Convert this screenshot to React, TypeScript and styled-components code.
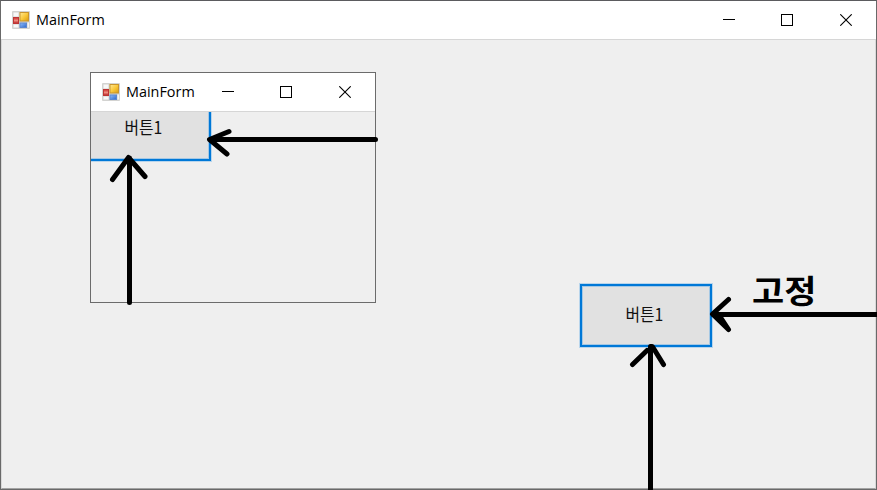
import React from "react";
import styled, { createGlobalStyle } from "styled-components";

const GlobalStyle = createGlobalStyle`
  *, *::before, *::after { box-sizing: border-box; }
  body { margin: 0; overflow: hidden; background: #f0f0f0; font-family: "Open Sans", "Noto Sans", sans-serif; }
`;

const Desktop = styled.main`
  position: relative;
  width: 877px;
  height: 490px;
  overflow: hidden;
`;

const OuterWindow = styled.section`
  width: 877px;
  height: 490px;
  display: flex;
  flex-direction: column;
  border: 1px solid #696969;
  border-top-color: #5b5b5e;
  background: #efefef;
`;

const InnerWindow = styled.section`
  position: absolute;
  left: 88px;
  top: 32px;
  width: 286px;
  height: 231px;
  display: flex;
  flex-direction: column;
  border: 1px solid #6b6b6b;
  background: #efefef;
`;

const TitleBar = styled.header`
  flex: none;
  height: 39px;
  display: flex;
  align-items: center;
  padding-left: 11px;
  background: #fff;
  border-bottom: 1px solid #d6d6d6;
`;

const Title = styled.h1`
  margin: 0 0 2px 6px;
  flex: 1;
  font: 400 15px/20px "Open Sans", "Noto Sans", sans-serif;
  color: #000;
  white-space: nowrap;
`;

const TitleText = styled.span`
  display: inline-block;
  transform: scaleX(0.96);
  transform-origin: left;
`;

const Controls = styled.div<{ $end: number }>`
  display: flex;
  gap: 46px;
  margin-right: ${(p) => p.$end}px;
`;

const ControlButton = styled.button<{ $shift?: number }>`
  display: block;
  width: 12px;
  height: 12px;
  padding: 0;
  border: 0;
  background: none;
  margin-left: ${(p) => p.$shift ?? 0}px;

  svg { display: block; }
`;

const OuterClient = styled.div`
  position: relative;
  flex: 1;
  border: solid #d9d9d9;
  border-width: 0 1px 1px 1px;
  border-bottom-color: #a3a3a3;
`;

const InnerClient = styled.div`
  flex: 1;
  overflow: hidden;
`;

const FormButton = styled.button`
  display: flex;
  align-items: center;
  justify-content: center;
  border: 2px solid #0078d7;
  background: #e1e1e1;
  box-shadow: 0 0 0 1px #b8d5ec, inset 0 0 0 1px #a5c8e4;
  color: #111;
  font: 400 17px/20px "Noto Sans CJK KR", sans-serif;
`;

const AnchoredButton = styled(FormButton)`
  position: absolute;
  left: 578px;
  top: 244px;
  width: 132px;
  height: 63px;
  padding: 0 3px 3px 0;
`;

const ClippedButton = styled(FormButton)`
  width: 132px;
  height: 62px;
  margin: -13px 0 0 -12px;
  padding: 0 3px 7px 0;
`;

const ButtonText = styled.span`
  display: block;
  transform: scaleX(0.93);
`;

const Note = styled.strong`
  position: absolute;
  left: 752px;
  top: 265px;
  color: #000;
  font: 700 35px/48px "Noto Sans CJK KR", sans-serif;
  white-space: nowrap;
  transform: scaleY(0.92);
`;

const ArrowLayer = styled.svg`
  position: absolute;
  inset: 0;
  pointer-events: none;
`;

const FormIcon = () => (
  <svg width="18" height="18" viewBox="0 0 18 18">
    <defs>
      <linearGradient id="gold" x1="0" y1="0" x2="1" y2="1">
        <stop offset="0" stopColor="#ffe99a" />
        <stop offset=".5" stopColor="#fac93c" />
        <stop offset="1" stopColor="#d99a10" />
      </linearGradient>
      <linearGradient id="red" x1="0" y1="0" x2="0" y2="1">
        <stop offset="0" stopColor="#c92e2b" />
        <stop offset=".5" stopColor="#ee8a7f" />
        <stop offset="1" stopColor="#b51f20" />
      </linearGradient>
      <linearGradient id="blue" x1="0" y1="0" x2="1" y2="1">
        <stop offset="0" stopColor="#8fbcff" />
        <stop offset="1" stopColor="#2e69c9" />
      </linearGradient>
    </defs>
    <rect width="18" height="18" rx="1" fill="#d3d3d1" />
    <rect x="1.5" y="1.5" width="5" height="4" fill="#f8f8f8" />
    <rect x="1.5" y="13.5" width="5" height="3" fill="#f8f8f8" />
    <rect x="15.5" y="11.5" width="1.5" height="5" fill="#f4f4f4" />
    <rect x="8" y="1.5" width="8.5" height="8.5" fill="url(#gold)" stroke="#c9952d" />
    <rect x="1.5" y="6.5" width="5" height="6" fill="url(#red)" stroke="#bd3434" />
    <rect x="8" y="12" width="6.5" height="4.5" fill="url(#blue)" stroke="#5c87d0" />
  </svg>
);

const WindowControls = ({ end, shift = 0 }: { end: number; shift?: number }) => (
  <Controls $end={end}>
    <ControlButton aria-label="Minimize">
      <svg width="12" height="12"><path d="M0 5.5H12" stroke="#000" /></svg>
    </ControlButton>
    <ControlButton aria-label="Maximize">
      <svg width="12" height="12"><rect x=".5" y=".5" width="11" height="11" fill="none" stroke="#000" /></svg>
    </ControlButton>
    <ControlButton aria-label="Close" $shift={shift}>
      <svg width="12" height="12"><path d="M.3 .3L11.7 11.7M11.7 .3L.3 11.7" stroke="#000" strokeWidth="1.1" /></svg>
    </ControlButton>
  </Controls>
);

const Bar = ({ end }: { end: number }) => (
  <TitleBar>
    <FormIcon />
    <Title><TitleText>MainForm</TitleText></Title>
    <WindowControls end={end} shift={1} />
  </TitleBar>
);

const Arrows = () => (
  <ArrowLayer width="877" height="490" fill="none" stroke="#000" strokeWidth="5" strokeLinecap="round" strokeLinejoin="round">
    <path d="M375.5 139.5H210M229 131.5L209.5 139.5L227 154" />
    <path d="M129.5 302.5V158M112.5 179.5L128.5 157.5L145 176.5" />
    <path d="M880 314.5H713M728.5 299.5L712.5 314L728.5 329.5M719 315L728.5 329.5" />
    <path d="M650.5 493V347M632.5 364.5L647 350.5M653 347.5L663.5 364.5M650.5 346.5H652" />
  </ArrowLayer>
);

export default function App() {
  return (
    <Desktop>
      <GlobalStyle />
      <OuterWindow>
        <Bar end={24} />
        <OuterClient>
          <InnerWindow>
            <Bar end={24} />
            <InnerClient>
              <ClippedButton><ButtonText>버튼1</ButtonText></ClippedButton>
            </InnerClient>
          </InnerWindow>
          <AnchoredButton><ButtonText>버튼1</ButtonText></AnchoredButton>
        </OuterClient>
      </OuterWindow>
      <Note>고정</Note>
      <Arrows />
    </Desktop>
  );
}
